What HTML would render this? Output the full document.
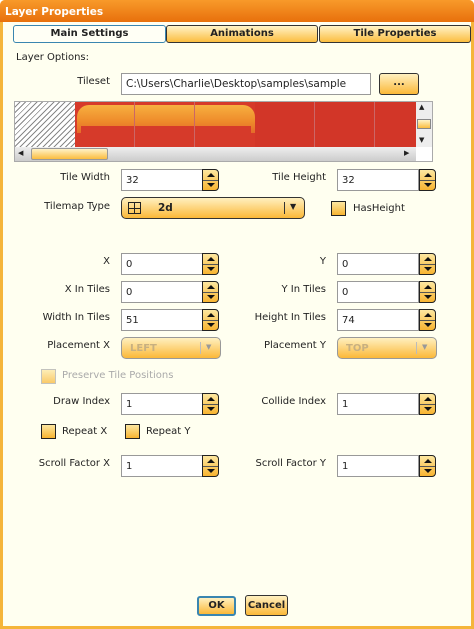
<!DOCTYPE html>
<html><head><style>
*{box-sizing:border-box;margin:0;padding:0}
body{width:474px;height:629px;overflow:hidden;font-family:"DejaVu Sans",Verdana,sans-serif;font-size:10px;color:#222;background:#fff}
.win{position:absolute;left:0;top:0;width:474px;height:629px;background:#fffff0;box-shadow:inset 0 0 0 3px #f5b53a;border-radius:5px 5px 0 0}
.title{position:absolute;left:0;top:0;width:474px;height:22px;background:linear-gradient(#f89a2a,#e8700c);border-radius:5px 5px 0 0;color:#fff;font-weight:bold;font-size:10.5px;padding:6px 0 0 5px}
.a{position:absolute}
.tab{position:absolute;top:25px;height:18px;border:1px solid #333;border-radius:3px;background:linear-gradient(#fff3c8,#fbbd3f);font-weight:bold;text-align:center;line-height:16px;font-size:10px}
.lbl{position:absolute;text-align:right;width:120px}
.inp{position:absolute;height:22px;background:#fff;border:1px solid #999;padding:5px 0 0 4px}
.spin{position:absolute;width:17px;height:22px;border:1px solid #222;border-radius:0 4px 4px 0;background:linear-gradient(#fde7a0,#f8b431)}
.spin:before{content:"";position:absolute;left:4px;top:3px;border:4px solid transparent;border-top:none;border-bottom:4px solid #111}
.spin:after{content:"";position:absolute;left:4px;top:13px;border:4px solid transparent;border-bottom:none;border-top:4px solid #111}
.spin i{position:absolute;left:0;right:0;top:10px;border-top:1px solid #555}
.cb{position:absolute;width:15px;height:15px;border:1px solid #222;background:linear-gradient(#fde7a0,#f8b431)}
.btn{position:absolute;border-radius:3px;background:linear-gradient(#fff0c0,#fbb838);font-weight:bold;text-align:center}
</style></head><body>
<div class="win">
<div class="title">Layer Properties</div>
<div class="tab" style="left:13px;width:153px;background:#fffff5;border-color:#3a86b0">Main Settings</div>
<div class="tab" style="left:166px;width:152px">Animations</div>
<div class="tab" style="left:319px;width:152px">Tile Properties</div>
<div class="a" style="left:16px;top:52px">Layer Options:</div>
<div class="lbl" style="left:-10px;top:76px">Tileset</div>
<div class="inp" style="left:121px;top:73px;width:250px;font-size:10.5px;padding-top:4px;white-space:nowrap;overflow:hidden">C:\Users\Charlie\Desktop\samples\sample</div>
<div class="btn" style="left:379px;top:73px;width:40px;height:22px;border:1px solid #333;line-height:18px">...</div>
<div class="a" style="left:14px;top:101px;width:419px;height:61px;border:1px solid #aaa;background:#fff">
 <div class="a" style="left:0;top:0;width:60px;height:45px;background:repeating-linear-gradient(135deg,#fff 0 3px,#888 3px 4px)"></div>
 <div class="a" style="left:60px;top:0;width:180px;height:45px;background:#d63a2a"></div>
 <div class="a" style="left:62px;top:3px;width:178px;height:28px;background:linear-gradient(#f7b040,#ee8a2a 60%,#e46a2a);border-radius:12px 12px 0 0"></div>
 <div class="a" style="left:66px;top:24px;width:170px;height:21px;background:#d63a2a"></div>
 <div class="a" style="left:240px;top:0;width:161px;height:45px;background:#d23628"></div>
 <div class="a" style="left:119px;top:0;width:1px;height:45px;background:#c66"></div>
 <div class="a" style="left:179px;top:0;width:1px;height:45px;background:#c66"></div>
 <div class="a" style="left:299px;top:0;width:1px;height:45px;background:#c66"></div>
 <div class="a" style="left:359px;top:0;width:1px;height:45px;background:#c66"></div>
 <div class="a" style="left:401px;top:0;width:16px;height:45px;background:#eee"><div class="a" style="left:1px;top:17px;width:14px;height:10px;background:linear-gradient(#fff3c8,#fbbd3f);border:1px solid #888"></div><div class="a" style="left:3px;top:1px;font-size:7px">▲</div><div class="a" style="left:3px;top:34px;font-size:7px">▼</div></div>
 <div class="a" style="left:0;top:45px;width:401px;height:14px;background:linear-gradient(#eee,#ccc)"><div class="a" style="left:16px;top:1px;width:77px;height:12px;background:linear-gradient(#fff3c8,#fbbd3f);border:1px solid #999;border-radius:2px"></div><div class="a" style="left:3px;top:2px;font-size:7px">◀</div><div class="a" style="left:389px;top:2px;font-size:7px">▶</div></div>
</div>

<div class="lbl" style="left:-10px;top:172px">Tile Width</div>
<div class="inp" style="left:121px;top:169px;width:82px">32</div><div class="spin" style="left:202px;top:169px"><i></i></div>
<div class="lbl" style="left:206px;top:172px">Tile Height</div>
<div class="inp" style="left:337px;top:169px;width:82px">32</div><div class="spin" style="left:419px;top:169px"><i></i></div>

<div class="lbl" style="left:-10px;top:201px">Tilemap Type</div>
<div class="btn" style="left:121px;top:197px;width:184px;height:22px;border:1px solid #333;border-radius:5px;text-align:left;padding:4px 0 0 36px;font-size:10.5px">2d
 <div class="a" style="left:6px;top:4px;width:13px;height:12px;border:1px solid #222;background:linear-gradient(#222,#222) 5px 0/1px 100% no-repeat,linear-gradient(#222,#222) 0 5px/100% 1px no-repeat"></div>
 <div class="a" style="left:162px;top:4px;width:1px;height:12px;background:#333"></div>
 <div class="a" style="left:168px;top:4px;font-size:8px">▼</div></div>
<div class="cb" style="left:331px;top:201px"></div><div class="a" style="left:353px;top:203px">HasHeight</div>

<div class="lbl" style="left:-10px;top:256px">X</div>
<div class="inp" style="left:121px;top:253px;width:82px">0</div><div class="spin" style="left:202px;top:253px"><i></i></div>
<div class="lbl" style="left:206px;top:256px">Y</div>
<div class="inp" style="left:337px;top:253px;width:82px">0</div><div class="spin" style="left:419px;top:253px"><i></i></div>

<div class="lbl" style="left:-10px;top:284px">X In Tiles</div>
<div class="inp" style="left:121px;top:281px;width:82px">0</div><div class="spin" style="left:202px;top:281px"><i></i></div>
<div class="lbl" style="left:206px;top:284px">Y In Tiles</div>
<div class="inp" style="left:337px;top:281px;width:82px">0</div><div class="spin" style="left:419px;top:281px"><i></i></div>

<div class="lbl" style="left:-10px;top:312px">Width In Tiles</div>
<div class="inp" style="left:121px;top:309px;width:82px">51</div><div class="spin" style="left:202px;top:309px"><i></i></div>
<div class="lbl" style="left:206px;top:312px">Height In Tiles</div>
<div class="inp" style="left:337px;top:309px;width:82px">74</div><div class="spin" style="left:419px;top:309px"><i></i></div>

<div class="lbl" style="left:-10px;top:340px">Placement X</div>
<div class="btn" style="left:121px;top:337px;width:100px;height:22px;border:1px solid #999;border-radius:5px;text-align:left;padding:5px 0 0 8px;color:#c8b080">LEFT<div class="a" style="left:78px;top:4px;width:1px;height:12px;background:#bbb"></div><div class="a" style="left:84px;top:5px;font-size:7px;color:#999">▼</div></div>
<div class="lbl" style="left:206px;top:340px">Placement Y</div>
<div class="btn" style="left:337px;top:337px;width:100px;height:22px;border:1px solid #999;border-radius:5px;text-align:left;padding:5px 0 0 8px;color:#c8b080">TOP<div class="a" style="left:78px;top:4px;width:1px;height:12px;background:#bbb"></div><div class="a" style="left:84px;top:5px;font-size:7px;color:#999">▼</div></div>

<div class="cb" style="left:41px;top:369px;border-color:#aaa;opacity:.7"></div><div class="a" style="left:62px;top:370px;color:#aaa">Preserve Tile Positions</div>

<div class="lbl" style="left:-10px;top:396px">Draw Index</div>
<div class="inp" style="left:121px;top:393px;width:82px">1</div><div class="spin" style="left:202px;top:393px"><i></i></div>
<div class="lbl" style="left:206px;top:396px">Collide Index</div>
<div class="inp" style="left:337px;top:393px;width:82px">1</div><div class="spin" style="left:419px;top:393px"><i></i></div>

<div class="cb" style="left:41px;top:424px"></div><div class="a" style="left:62px;top:426px">Repeat X</div>
<div class="cb" style="left:125px;top:424px"></div><div class="a" style="left:146px;top:426px">Repeat Y</div>

<div class="lbl" style="left:-10px;top:458px">Scroll Factor X</div>
<div class="inp" style="left:121px;top:455px;width:82px">1</div><div class="spin" style="left:202px;top:455px"><i></i></div>
<div class="lbl" style="left:206px;top:458px">Scroll Factor Y</div>
<div class="inp" style="left:337px;top:455px;width:82px">1</div><div class="spin" style="left:419px;top:455px"><i></i></div>

<div class="btn" style="left:197px;top:596px;width:39px;height:20px;border:2px solid #3a86b0;line-height:16px">OK</div>
<div class="btn" style="left:245px;top:595px;width:43px;height:21px;border:1px solid #333;line-height:19px">Cancel</div>
</div>
</body></html>
